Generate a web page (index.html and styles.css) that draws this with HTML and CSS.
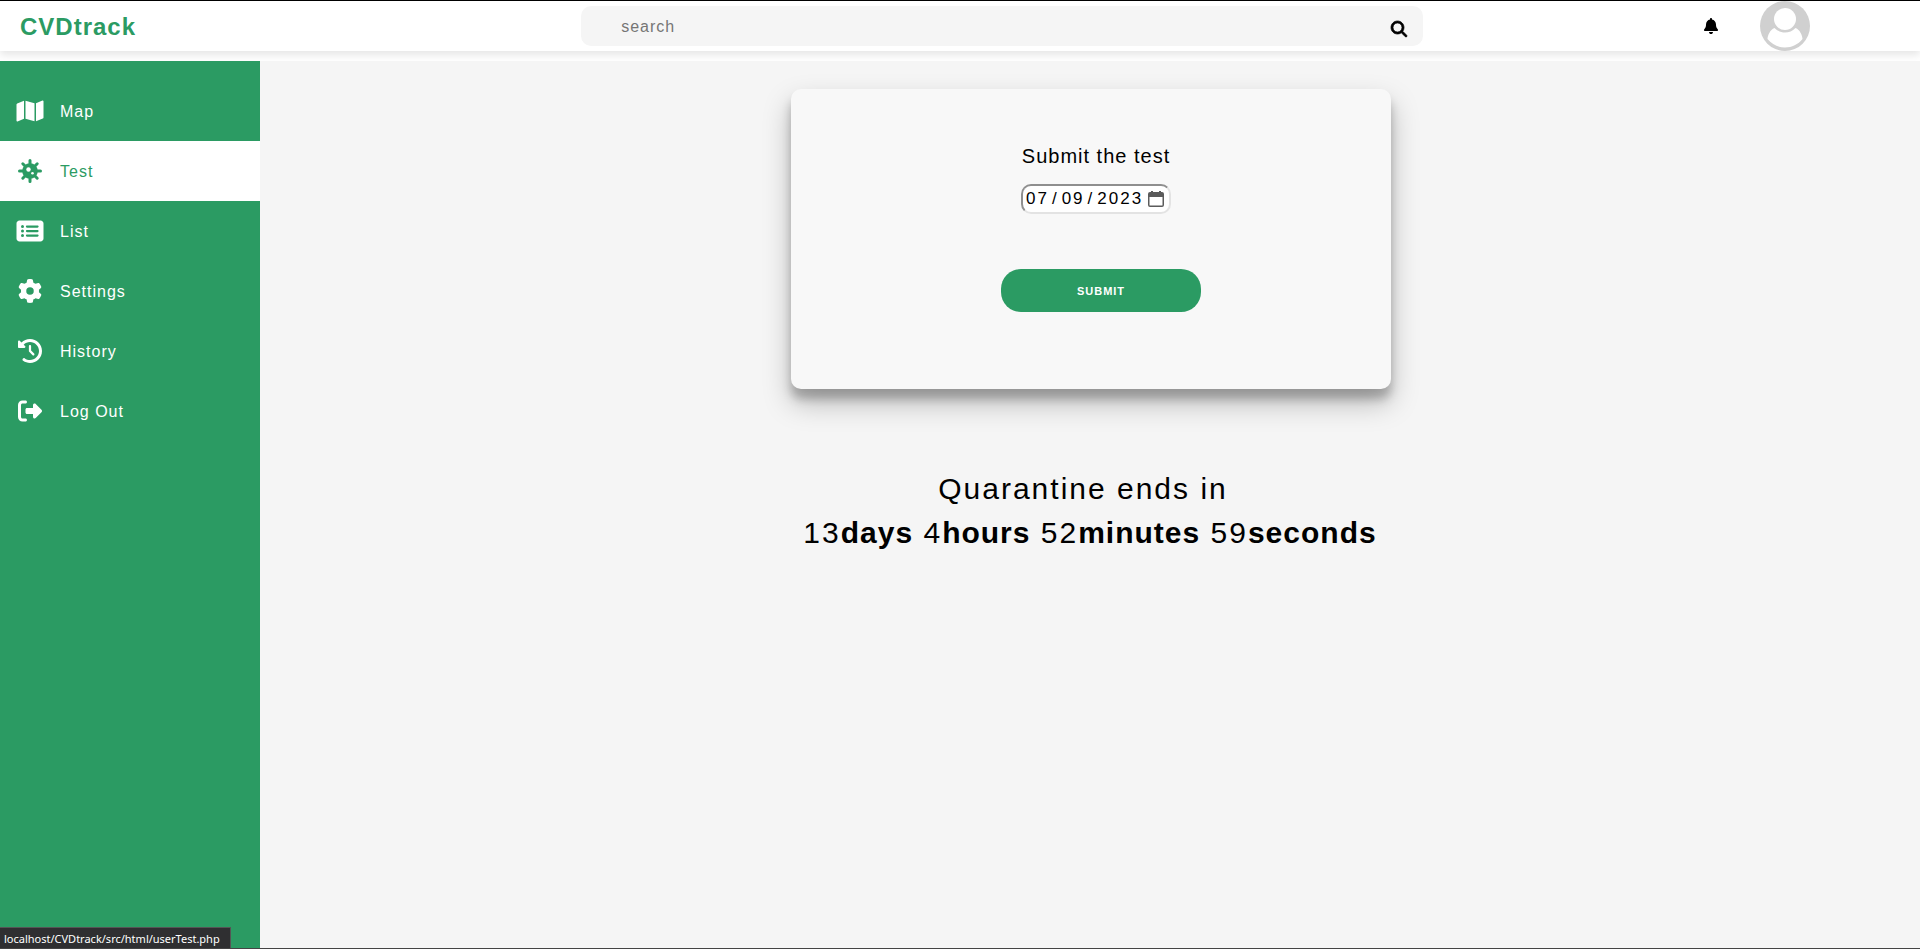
FILE: index.html
```html
<!DOCTYPE html>
<html lang="en">
<head>
<meta charset="utf-8">
<title>CVDtrack</title>
<link rel="stylesheet" href="styles.css">
</head>
<body>
<header class="topbar">
  <div class="logo">CVDtrack</div>
  <form class="search" role="search">
    <input class="search-input" type="text" placeholder="search" aria-label="search">
    <button class="search-button" type="button" aria-label="Search">
      <svg viewBox="0 0 512 512" width="16" height="16"><path stroke="currentColor" stroke-width="24" d="M416 208c0 45.9-14.9 88.3-40 122.7L502.6 457.4c12.5 12.5 12.5 32.8 0 45.3s-32.8 12.5-45.3 0L330.7 376c-34.4 25.2-76.8 40-122.7 40C93.1 416 0 322.9 0 208S93.1 0 208 0S416 93.1 416 208zM208 352a144 144 0 1 0 0-288 144 144 0 1 0 0 288z"/></svg>
    </button>
  </form>
  <div class="account">
    <button class="bell" type="button" aria-label="Notifications">
      <svg viewBox="0 0 448 512" width="14" height="16"><path d="M224 0c-17.7 0-32 14.3-32 32V51.2C119 66 64 130.6 64 208v18.8c0 47-17.3 92.4-48.5 127.6l-7.4 8.3c-8.4 9.4-10.4 22.9-5.3 34.4S19.4 416 32 416H416c12.6 0 24-7.4 29.2-18.9s3.1-25-5.3-34.4l-7.4-8.3C401.3 319.2 384 273.9 384 226.8V208c0-77.4-55-142-128-156.8V32c0-17.7-14.3-32-32-32zm45.3 493.3c12-12 18.7-28.3 18.7-45.3H224 160c0 17 6.7 33.3 18.7 45.3s28.3 18.7 45.3 18.7s33.3-6.7 45.3-18.7z"/></svg>
    </button>
    <svg class="avatar" viewBox="0 0 50 50" width="50" height="50" role="img" aria-label="User">
      <circle cx="25" cy="25" r="25" fill="#d0d0d0"/>
      <path d="M14.500 27C10 28.500 7.500 35 7.500 38C12 43.500 18 46.500 25 46.500C32 46.500 38 43.500 42.500 38C42.500 35 40 28.500 35.500 27C32.500 30 29 31.500 25 31.500C21 31.500 17.500 30 14.500 27Z" fill="#fff"/>
      <circle cx="25" cy="18" r="11" fill="#fff"/>
    </svg>
  </div>
</header>
<div class="layout">
  <nav class="sidebar">
    <a class="nav-item" href="#"><span class="nav-icon"><svg viewBox="0 0 576 512" width="28" height="24"><path d="M384 476.1L192 421.2V35.9L384 90.8V476.1zM416 88.4V475.5l144.6-57.9c9.1-3.6 15.4-12.6 15.4-22.3V48.8c0-11.3-11.4-19.1-21.900-14.900L416 88.4zM15.100 95.100C6 98.800 0 107.600 0 117.400V463.200c0 11.300 11.400 19.100 21.900 14.900L160 423.600V36.600L15.100 95.100z"/></svg></span><span class="nav-label">Map</span></a>
    <a class="nav-item active" href="#"><span class="nav-icon"><svg viewBox="0 0 24 24" width="24" height="24"><circle cx="12" cy="12" r="7.800"/><path stroke="currentColor" stroke-width="3" stroke-linecap="round" d="M12 1.500V22.500M1.500 12H22.500M4.800 4.800L19.200 19.200M19.200 4.800L4.800 19.200"/><circle cx="10.500" cy="10.500" r="2.200" fill="#fff"/><circle cx="14.500" cy="14.300" r="1.300" fill="#fff"/></svg></span><span class="nav-label">Test</span></a>
    <a class="nav-item" href="#"><span class="nav-icon"><svg viewBox="0 0 576 512" width="28" height="24"><path fill-rule="evenodd" d="M0 96C0 60.700 28.700 32 64 32H512c35.300 0 64 28.700 64 64V416c0 35.300-28.700 64-64 64H64c-35.300 0-64-28.700-64-64V96zM128 288a32 32 0 1 0 0-64 32 32 0 1 0 0 64zm32-128a32 32 0 1 0-64 0 32 32 0 1 0 64 0zM128 384a32 32 0 1 0 0-64 32 32 0 1 0 0 64zm96-248c-13.300 0-24 10.700-24 24s10.700 24 24 24H448c13.300 0 24-10.700 24-24s-10.700-24-24-24H224zm0 96c-13.300 0-24 10.700-24 24s10.700 24 24 24H448c13.300 0 24-10.700 24-24s-10.700-24-24-24H224zm0 96c-13.300 0-24 10.700-24 24s10.700 24 24 24H448c13.300 0 24-10.700 24-24s-10.700-24-24-24H224z"/></svg></span><span class="nav-label">List</span></a>
    <a class="nav-item" href="#"><span class="nav-icon"><svg viewBox="0 0 512 512" width="24" height="24"><path d="M495.9 166.6c3.2 8.7 .5 18.4-6.4 24.6l-43.3 39.4c1.1 8.3 1.7 16.8 1.7 25.4s-.6 17.1-1.7 25.4l43.3 39.4c6.9 6.2 9.6 15.9 6.4 24.6c-4.4 11.9-9.7 23.3-15.8 34.3l-4.7 8.1c-6.6 11-14 21.4-22.1 31.2c-5.9 7.2-15.7 9.6-24.5 6.8l-55.7-17.7c-13.4 10.3-28.2 18.9-44 25.4l-12.5 57.1c-2 9.1-9 16.3-18.2 17.8c-13.8 2.3-28 3.5-42.5 3.5s-28.7-1.2-42.5-3.5c-9.2-1.5-16.2-8.7-18.2-17.8l-12.5-57.1c-15.8-6.5-30.6-15.1-44-25.4L83.1 425.9c-8.8 2.8-18.6 .3-24.5-6.8c-8.1-9.8-15.5-20.2-22.1-31.2l-4.7-8.1c-6.1-11-11.4-22.4-15.8-34.3c-3.2-8.7-.5-18.4 6.4-24.6l43.3-39.4C64.6 273.1 64 264.6 64 256s.6-17.1 1.7-25.4L22.4 191.2c-6.9-6.2-9.6-15.9-6.4-24.6c4.4-11.9 9.7-23.3 15.8-34.3l4.7-8.1c6.6-11 14-21.4 22.1-31.2c5.9-7.2 15.7-9.6 24.5-6.8l55.700 17.700c13.400-10.300 28.200-18.900 44-25.400l12.500-57.100c2-9.100 9-16.300 18.200-17.800C227.300 1.200 241.500 0 256 0s28.700 1.200 42.500 3.500c9.200 1.500 16.200 8.700 18.200 17.800l12.500 57.100c15.800 6.500 30.600 15.100 44 25.400l55.700-17.700c8.800-2.800 18.600-.3 24.500 6.800c8.100 9.800 15.500 20.200 22.100 31.200l4.700 8.100c6.100 11 11.400 22.400 15.800 34.300zM256 336a80 80 0 1 0 0-160 80 80 0 1 0 0 160z"/></svg></span><span class="nav-label">Settings</span></a>
    <a class="nav-item" href="#"><span class="nav-icon"><svg viewBox="0 0 512 512" width="24" height="24"><path d="M75 75L41 41C25.9 25.9 0 36.6 0 57.9V168c0 13.3 10.7 24 24 24H134.100c21.400 0 32.100-25.900 17-41l-30.800-30.800C155 85.500 203 64 256 64c106 0 192 86 192 192s-86 192-192 192c-40.800 0-78.600-12.700-109.700-34.400c-14.500-10.100-34.400-6.600-44.600 7.900s-6.600 34.400 7.900 44.600C151.200 495 201.700 512 256 512c141.400 0 256-114.600 256-256S397.400 0 256 0C185.300 0 121.300 28.700 75 75zm181 53c-13.300 0-24 10.700-24 24V256c0 6.400 2.500 12.500 7 17l72 72c9.400 9.400 24.600 9.400 33.900 0s9.400-24.600 0-33.900l-65-65V152c0-13.300-10.700-24-24-24z"/></svg></span><span class="nav-label">History</span></a>
    <a class="nav-item" href="#"><span class="nav-icon"><svg viewBox="0 0 512 512" width="24" height="24"><path d="M377.9 105.9L500.7 228.7c7.2 7.2 11.3 17.1 11.3 27.3s-4.1 20.1-11.3 27.3L377.9 406.1c-6.4 6.4-15 9.9-24 9.9c-18.7 0-33.9-15.2-33.9-33.9l0-62.1-128 0c-17.7 0-32-14.3-32-32l0-64c0-17.7 14.3-32 32-32l128 0 0-62.1c0-18.7 15.2-33.9 33.9-33.9c9 0 17.6 3.6 24 9.9zM160 96L96 96c-17.7 0-32 14.3-32 32l0 256c0 17.7 14.3 32 32 32l64 0c17.7 0 32 14.3 32 32s-14.3 32-32 32l-64 0c-53 0-96-43-96-96L0 128C0 75 43 32 96 32l64 0c17.7 0 32 14.3 32 32s-14.3 32-32 32z"/></svg></span><span class="nav-label">Log Out</span></a>
  </nav>
  <main class="content">
    <form class="card">
      <label class="card-title" for="test-date">Submit the test</label>
      <input class="date" id="test-date" type="date" value="2023-07-09">
      <button class="submit" type="button">SUBMIT</button>
    </form>
    <section class="countdown">
      <p class="countdown-title">Quarantine ends in</p>
      <p class="countdown-time">13<b>days</b> 4<b>hours</b> 52<b>minutes</b> 59<b>seconds</b></p>
    </section>
  </main>
</div>
<div class="status">localhost/CVDtrack/src/html/userTest.php</div>
</body>
</html>
```
FILE: styles.css
```css
* {
  box-sizing: border-box;
  margin: 0;
  padding: 0;
}

body {
  display: flex;
  flex-direction: column;
  min-height: 100vh;
  border-top: 1px solid #000;
  border-bottom: 1px solid #444;
  background: #fff;
  color: #000;
  font-family: "Liberation Sans", Arial, sans-serif;
  font-size: 16px;
  letter-spacing: 1px;
}

button,
input {
  border: 0;
  font-family: inherit;
  letter-spacing: inherit;
}

button {
  background: none;
  cursor: pointer;
}

svg {
  display: block;
  overflow: visible;
  fill: currentColor;
}

.topbar {
  display: grid;
  grid-template-columns: 20fr 30fr 17fr;
  align-items: center;
  height: 50px;
  margin-bottom: 10px;
  padding: 0 20px;
  box-shadow: 0 4px 8px rgba(0, 0, 0, 0.1);
}

.logo {
  padding-top: 2px;
  color: #2b9b63;
  font-size: 24px;
  font-weight: bold;
}

.search {
  display: flex;
  align-items: center;
  height: 40px;
  padding: 0 16px 0 40px;
  border-radius: 10px;
  background: #f5f5f5;
}

.search-input {
  flex: 1;
  min-width: 0;
  height: 40px;
  padding-top: 2px;
  outline: 0;
  background: transparent;
  font-size: 16px;
}

.search-button {
  padding-top: 6px;
}

.account {
  display: flex;
  align-items: center;
  justify-content: flex-end;
  gap: 42px;
  padding-right: 90px;
}

.layout {
  display: flex;
  flex: 1;
}

.sidebar {
  width: 260px;
  padding-top: 20px;
  background: #2b9b63;
}

.nav-item {
  display: flex;
  align-items: center;
  height: 60px;
  color: #fff;
  text-decoration: none;
}

.nav-item.active {
  background: #fff;
  color: #2b9b63;
}

.nav-icon {
  display: flex;
  justify-content: center;
  width: 60px;
  padding-right: 1px;
}

.nav-label {
  padding-top: 2px;
}

.content {
  display: flex;
  flex: 1;
  flex-direction: column;
  align-items: center;
  padding: 28px 0 0 2px;
  background: #f5f5f5;
}

.card {
  display: flex;
  flex-direction: column;
  align-items: center;
  width: 600px;
  height: 300px;
  padding: 55px 0 0 10px;
  border-radius: 10px;
  background: #f8f8f8;
  box-shadow: 0 14px 28px rgba(0, 0, 0, 0.25), 0 10px 10px rgba(0, 0, 0, 0.22);
}

.card-title {
  font-size: 20px;
  line-height: 24px;
}

.date {
  width: 150px;
  height: 30px;
  margin: 16px 0 55px;
  padding: 0 5px 0 2px;
  border: 2px inset #e3e3e3;
  border-radius: 10px;
  background: #fff;
  font-size: 17px;
  letter-spacing: 2px;
}

.date::-webkit-datetime-edit-text {
  padding: 0 2px;
}

.date::-webkit-calendar-picker-indicator {
  width: 16px;
  height: 16px;
  margin: 0;
  padding: 0;
  background: url("data:image/svg+xml,%3Csvg xmlns='http://www.w3.org/2000/svg' viewBox='0 0 16 16'%3E%3Cpath fill='%235b5b5b' fill-rule='evenodd' d='M3 0h2v1h6V0h2v1h1a2 2 0 0 1 2 2v11a2 2 0 0 1-2 2H2a2 2 0 0 1-2-2V3a2 2 0 0 1 2-2h1zM1.500 6v8a.500.500 0 0 0 .500.500h12a.500.500 0 0 0 .500-.500V6z'/%3E%3C/svg%3E") center / 16px 16px no-repeat;
}

.submit {
  width: 200px;
  height: 43px;
  margin-left: 10px;
  border-radius: 20px;
  background: #2b9b63;
  color: #fff;
  font-size: 11px;
  font-weight: bold;
}

.countdown {
  margin-top: 78px;
  padding-right: 2px;
  font-size: 30px;
  letter-spacing: 2px;
  line-height: 44px;
  text-align: center;
}

.countdown-title {
  padding-right: 14px;
}

.countdown b {
  letter-spacing: 1px;
}

.status {
  position: fixed;
  bottom: 1px;
  left: 0;
  height: 21px;
  padding: 0 10px 0 4px;
  border-top: 1px solid #555;
  border-right: 1px solid #555;
  background: #2f2f31;
  color: #fff;
  font-family: "Noto Sans", "Open Sans", sans-serif;
  font-size: 11px;
  letter-spacing: 0;
  line-height: 22px;
}
```
